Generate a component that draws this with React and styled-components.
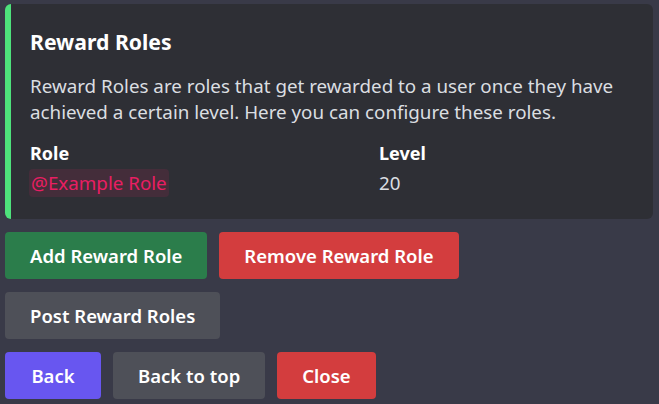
import React from 'react';
import styled, { createGlobalStyle } from 'styled-components';

const GlobalStyle = createGlobalStyle`
  html, body {
    margin: 0;
    padding: 0;
    background: #393a48;
  }
  body {
    font-family: 'Noto Sans', 'Open Sans', sans-serif;
    -webkit-font-smoothing: antialiased;
  }
`;

const Page = styled.div`
  display: flex;
  flex-direction: column;
  gap: 13px;
  padding: 4px 6px 0 5px;
  width: 659px;
  height: 404px;
  box-sizing: border-box;
`;

const Embed = styled.div`
  background: #2e2f35;
  border-left: 6px solid #4ee27c;
  border-radius: 6px;
  padding: 25px 20px 22px 19px;
  color: #dbdee1;
`;

const Title = styled.div`
  font-size: 21.2px;
  font-weight: 700;
  line-height: 26px;
  color: #ffffff;
  margin-bottom: 18px;
`;

const Description = styled.div`
  font-size: 18.8px;
  line-height: 26px;
  color: #dbdee1;
  margin-bottom: 15px;
`;

const Fields = styled.div`
  display: grid;
  grid-template-columns: 349px 1fr;
`;

const Field = styled.div`
  display: flex;
  flex-direction: column;
  align-items: flex-start;
  gap: 3px;
`;

const FieldName = styled.div`
  font-size: 18px;
  font-weight: 700;
  line-height: 26px;
  color: #ffffff;
`;

const FieldValue = styled.div`
  font-size: 18.8px;
  line-height: 28px;
  color: #dbdee1;
`;

const Mention = styled.span`
  display: inline-block;
  color: #e91e63;
  background: rgba(233, 30, 99, 0.12);
  border-radius: 4px;
  padding: 0 2px;
  margin-left: -1px;
`;

const ButtonRow = styled.div`
  display: flex;
  gap: 12px;
`;

const colors = {
  success: '#2b7d4b',
  danger: '#d33d3e',
  secondary: '#4e5058',
  primary: '#6856f0',
};

const Button = styled.button`
  height: 47px;
  min-width: 96px;
  padding: 0 25px;
  border: none;
  border-radius: 4px;
  background: ${props => colors[props.$variant]};
  color: #ffffff;
  font-family: inherit;
  font-size: 18.5px;
  font-weight: 600;
  cursor: pointer;
`;

const App = () => {
  return (
    <>
      <GlobalStyle />
      <Page>
        <Embed>
          <Title>Reward Roles</Title>
          <Description>
            Reward Roles are roles that get rewarded to a user once they have achieved a certain level. Here you can configure these roles.
          </Description>
          <Fields>
            <Field>
              <FieldName>Role</FieldName>
              <FieldValue><Mention>@Example Role</Mention></FieldValue>
            </Field>
            <Field>
              <FieldName>Level</FieldName>
              <FieldValue>20</FieldValue>
            </Field>
          </Fields>
        </Embed>
        <ButtonRow>
          <Button $variant="success">Add Reward Role</Button>
          <Button $variant="danger">Remove Reward Role</Button>
        </ButtonRow>
        <ButtonRow>
          <Button $variant="secondary">Post Reward Roles</Button>
        </ButtonRow>
        <ButtonRow>
          <Button $variant="primary">Back</Button>
          <Button $variant="secondary">Back to top</Button>
          <Button $variant="danger">Close</Button>
        </ButtonRow>
      </Page>
    </>
  );
};

export default App;
